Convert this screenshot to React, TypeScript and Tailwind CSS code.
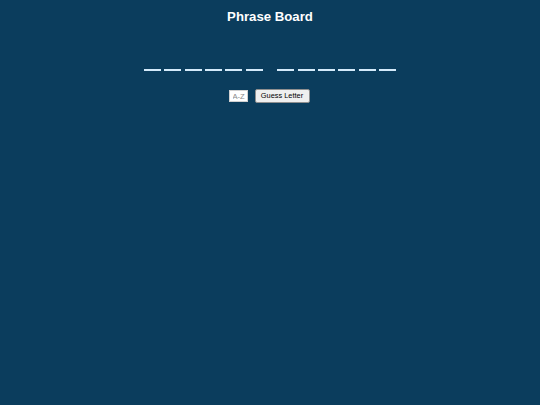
import React from "react";

const words = [6, 6];

export default function App() {
  return (
    <div className="w-[540px] h-[405px] bg-[#0b3d5d] flex flex-col items-center font-['Liberation_Sans',Arial,sans-serif]">
      <h1 className="mt-[9px] h-[15px] leading-[15px] text-[13.2px] font-bold text-white">Phrase Board</h1>
      <div className="mt-[45px] flex gap-[14.6px]">
        {words.map((n, wi) => (
          <div key={wi} className="flex gap-[3.4px]">
            {Array.from({ length: n }).map((_, i) => (
              <div key={i} className="w-[17px] h-[2px] bg-[#d4eafa]" />
            ))}
          </div>
        ))}
      </div>
      <div className="mt-[18px] flex items-center gap-[7px] mr-[2px]">
        <input
          placeholder="A-Z"
          className="w-[19px] h-[12px] bg-white border border-[#d0d0d0] text-[7.6px] leading-[10px] pl-[3px] pr-0 text-left placeholder:text-[#8a8a8a] outline-none"
        />
        <button className="h-[14px] w-[55px] bg-[#efefef] border border-[#8f8f8f] rounded-[2px] text-[7.4px] leading-[12px] text-black">
          Guess Letter
        </button>
      </div>
    </div>
  );
}
